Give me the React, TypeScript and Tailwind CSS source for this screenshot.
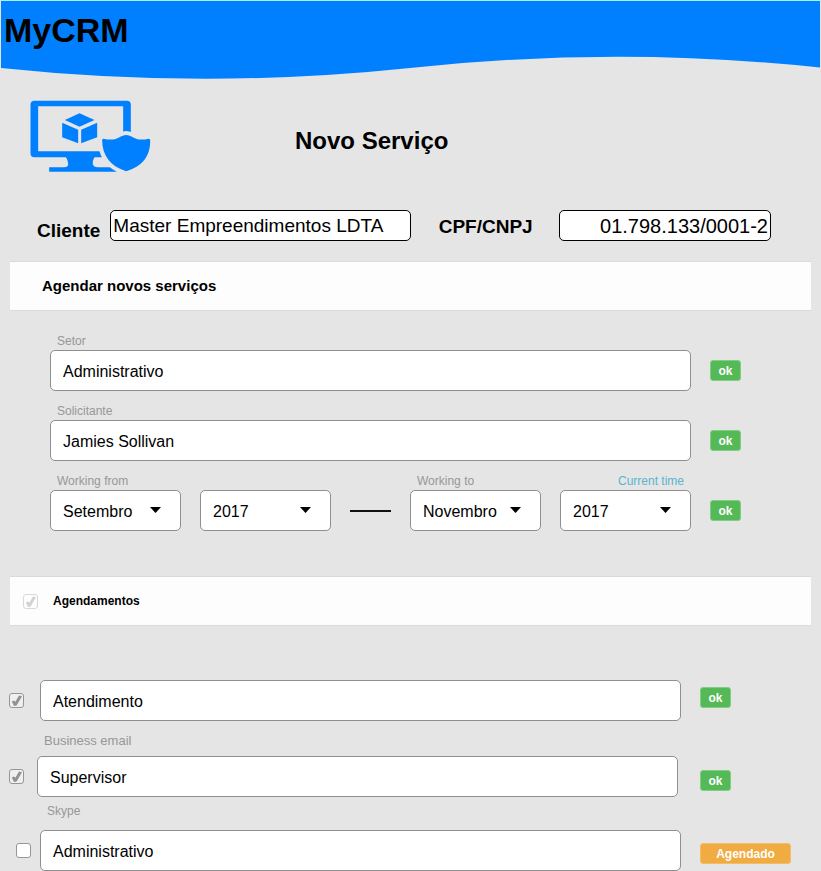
import React, { useState } from "react";

const fieldBox =
  "h-[41px] w-full min-w-0 rounded-[5px] border border-[#8f8f8f] bg-white px-3 pt-0.5 text-base text-black";
const caption = "text-xs leading-4 text-[#979797]";

function Header() {
  return (
    <header className="relative h-20 border-t border-[#a9efff]">
      <svg
        className="absolute inset-x-0 top-0 h-full w-full"
        viewBox="0 1 821 79"
        preserveAspectRatio="none"
        aria-hidden="true"
      >
        <path d="M1 0H820V67.5Q615 46 410 68Q205 89.5 1 68Z" fill="#0080ff" />
      </svg>
      <h1 className="relative pt-[9px] pl-1 text-[34px] leading-10 font-bold">MyCRM</h1>
    </header>
  );
}

function ServiceIcon() {
  return (
    <svg className="h-[72px] w-[121px] shrink-0" viewBox="30 29 362 216" fill="#0080ff" aria-hidden="true">
      <path
        fillRule="evenodd"
        d="M43 31H320Q332 31 332 43V201H43Q31 201 31 189V43Q31 31 43 31ZM54 48V183H309V48Z"
      />
      <path d="M137 200Q146 214 143 226Q140 231 130 231H87V244H290V231H232Q221 231 218 222Q216 212 223 200Z" />
      <path d="M178 69L223 89L178 109L134 89Z" />
      <path d="M126 97L174 118V159L126 141Z" />
      <path d="M231 97L183 118V159L231 141Z" />
      <path
        d="M250 145C270 150 284 148 295 142C305 137 311 134 318 134C325 134 331 137 341 142C352 148 366 150 386 145Q390 145 390 150C391 200 365 228 318 243C270 228 246 195 246 150Q246 145 250 145Z"
        stroke="#e5e5e5"
        strokeWidth="24"
        paintOrder="stroke"
      />
    </svg>
  );
}

function OkButton() {
  return (
    <button
      type="button"
      className="h-[21px] w-[31px] rounded-[3px] border border-[#7fce81] bg-[#56b958] text-xs leading-4 font-bold text-white"
    >
      ok
    </button>
  );
}

function SectionBar({ children }: { children: React.ReactNode }) {
  return (
    <div className="mx-2.5 flex h-[50px] items-center border-y border-[#dadada] bg-[#fdfdfd]">{children}</div>
  );
}

function CheckBox({ label, initial, faint }: { label: string; initial: boolean; faint?: boolean }) {
  const [on, setOn] = useState(initial);
  const tone = faint ? "border-[#d8d8d8] bg-transparent" : on ? "border-[#969696] bg-[#efefef]" : "border-[#969696] bg-white";
  return (
    <span className={`relative block size-[15px] ${faint ? "text-[#d2d2d2]" : "text-[#929292]"}`}>
      <input
        type="checkbox"
        aria-label={label}
        checked={on}
        onChange={(e) => setOn(e.target.checked)}
        className={`block size-[15px] appearance-none rounded-[3px] border ${tone}`}
      />
      {on && (
        <svg className="pointer-events-none absolute inset-0 size-[15px]" viewBox="0 0 15 15" aria-hidden="true">
          <path d="M2.8 8.6L5 7.6L6.4 8.8L10 2.4L13 3.2L7.6 12.4L5 13Z" fill="currentColor" />
        </svg>
      )}
    </span>
  );
}

function TextRow({ id, label, value }: { id: string; label: string; value: string }) {
  return (
    <div className="flex items-end gap-[19px]">
      <div className="flex-1">
        <label htmlFor={id} className={`mb-px block pl-[7px] ${caption}`}>
          {label}
        </label>
        <input id={id} defaultValue={value} className={fieldBox} />
      </div>
      <div className="flex h-[41px] w-20 items-center">
        <OkButton />
      </div>
    </div>
  );
}

function Picker({ id, label, name, options }: { id: string; label?: React.ReactNode; name: string; options: string[] }) {
  return (
    <div className="min-w-0 flex-[131]">
      {label}
      <div className="relative">
        <select id={id} aria-label={name} className={`block appearance-none ${fieldBox}`}>
          {options.map((o) => (
            <option key={o}>{o}</option>
          ))}
        </select>
        <svg
          className="pointer-events-none absolute top-[17px] right-5 h-[6px] w-[11px]"
          viewBox="0 0 11 6"
          aria-hidden="true"
        >
          <path d="M0 0H11L5.5 6Z" />
        </svg>
      </div>
    </div>
  );
}

export default function App() {
  return (
    <div className="min-h-screen bg-[#e5e5e5] font-['Liberation_Sans',Arial,sans-serif] text-black">
      <Header />
      <main>
        <div className="flex items-center gap-36 pt-5 pl-[30px]">
          <ServiceIcon />
          <h2 className="pt-2.5 text-2xl leading-8 font-bold">Novo Serviço</h2>
        </div>

        <div className="mt-[35px] flex items-center pr-[50px] pl-[37px] text-[19px]">
          <label htmlFor="cliente" className="pt-3 leading-6 font-bold">
            Cliente
          </label>
          <input
            id="cliente"
            defaultValue="Master Empreendimentos LDTA"
            className="ml-[10px] h-[31px] w-0 min-w-0 flex-[301] rounded-[5px] border border-black bg-white px-0.5 pt-0.5"
          />
          <label htmlFor="cnpj" className="ml-7 pt-[3px] leading-6 font-bold">
            CPF/CNPJ
          </label>
          <input
            id="cnpj"
            defaultValue="01.798.133/0001-2"
            className="ml-[26px] h-[31px] w-0 min-w-0 flex-[211] rounded-[5px] border border-black bg-white px-0.5 pt-0.5 text-right text-xl"
          />
        </div>

        <div className="mt-[18px]">
          <SectionBar>
            <h3 className="pl-8 text-[15px] leading-5 font-bold">Agendar novos serviços</h3>
          </SectionBar>
        </div>

        <form className="flex flex-col gap-3 pt-[22px] pr-[31px] pl-[50px]">
          <TextRow id="setor" label="Setor" value="Administrativo" />
          <TextRow id="solicitante" label="Solicitante" value="Jamies Sollivan" />
          <div className="flex items-end gap-[19px]">
            <div className="flex flex-1 items-end gap-[19px]">
              <Picker
                id="from-month"
                name="Working from"
                options={["Setembro", "Outubro", "Novembro"]}
                label={
                  <label htmlFor="from-month" className={`mb-px block pl-[7px] ${caption}`}>
                    Working from
                  </label>
                }
              />
              <Picker id="from-year" name="Working from, year" options={["2017", "2018"]} />
              <div className="flex h-[41px] flex-[41] items-center">
                <div className="h-[2px] w-full bg-[#111111]" />
              </div>
              <Picker
                id="to-month"
                name="Working to"
                options={["Novembro", "Dezembro"]}
                label={
                  <label htmlFor="to-month" className={`mb-px block pl-[7px] ${caption}`}>
                    Working to
                  </label>
                }
              />
              <Picker
                id="to-year"
                name="Working to, year"
                options={["2017", "2018"]}
                label={
                  <div className="mb-px pr-[7px] text-right text-xs leading-4 text-[#5ab4d0]">
                    <a href="#to-year">Current time</a>
                  </div>
                }
              />
            </div>
            <div className="flex h-[41px] w-20 items-center">
              <OkButton />
            </div>
          </div>
        </form>

        <div className="mt-[45px]">
          <SectionBar>
            <div className="pl-[13px]">
              <CheckBox label="Agendamentos" initial faint />
            </div>
            <h3 className="pl-[15px] text-xs leading-4 font-bold">Agendamentos</h3>
          </SectionBar>
        </div>

        <form className="mt-[54px]">
          <div className="grid grid-cols-[40px_1fr_140px] items-center">
            <div className="pl-[9px]">
              <CheckBox label="Selecionar Atendimento" initial />
            </div>
            <input aria-label="Atendimento" defaultValue="Atendimento" className={fieldBox} />
            <div className="flex self-start pt-[7px] pl-[19px]">
              <OkButton />
            </div>
          </div>

          <label htmlFor="email" className="mt-3 mb-[7px] block pl-11 text-[13px] leading-4 text-[#979797]">
            Business email
          </label>
          <div className="grid grid-cols-[37px_1fr_143px] items-center">
            <div className="pl-[9px]">
              <CheckBox label="Selecionar Supervisor" initial />
            </div>
            <input id="email" defaultValue="Supervisor" className={fieldBox} />
            <div className="flex self-start pt-[14px] pl-[22px]">
              <OkButton />
            </div>
          </div>

          <label htmlFor="skype" className={`mt-1.5 mb-[11px] block pl-[47px] ${caption}`}>
            Skype
          </label>
          <div className="grid grid-cols-[40px_1fr_140px] items-center">
            <div className="pl-4">
              <CheckBox label="Selecionar Administrativo" initial={false} />
            </div>
            <input id="skype" defaultValue="Administrativo" className={fieldBox} />
            <div className="flex self-start pt-[13px] pl-[19px]">
              <button
                type="button"
                className="h-[21px] w-[91px] rounded-[3px] border border-[#f2bc6c] bg-[#f0ab41] text-xs leading-4 font-bold text-white"
              >
                Agendado
              </button>
            </div>
          </div>
        </form>
      </main>
    </div>
  );
}
